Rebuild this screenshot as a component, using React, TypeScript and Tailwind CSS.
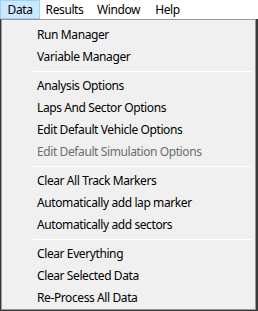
const groups: { label: string; disabled?: boolean }[][] = [
  [{ label: "Run Manager" }, { label: "Variable Manager" }],
  [
    { label: "Analysis Options" },
    { label: "Laps And Sector Options" },
    { label: "Edit Default Vehicle Options" },
    { label: "Edit Default Simulation Options", disabled: true },
  ],
  [
    { label: "Clear All Track Markers" },
    { label: "Automatically add lap marker" },
    { label: "Automatically add sectors" },
  ],
  [{ label: "Clear Everything" }, { label: "Clear Selected Data" }, { label: "Re-Process All Data" }],
];

export default function App() {
  return (
    <div className="w-[258px] h-[311px] bg-[#3a3a3a] overflow-hidden font-['Noto_Sans',sans-serif] text-[12px] tracking-[-0.4px] text-black">
      <div className="h-[19px] bg-white flex items-center">
        <div className="h-full w-[40px] flex items-center justify-center bg-[#cce8ff] border border-[#99d1ff]">Data</div>
        <div className="w-[49px] text-center">Results</div>
        <div className="w-[59px] text-center">Window</div>
        <div className="w-[39px] text-center">Help</div>
      </div>
      <div className="ml-px w-[255px] h-[291px] bg-[#f0f0f0] border border-[#979797] pt-[4px]">
        {groups.map((g, i) => (
          <div key={i}>
            {i > 0 && (
              <div className="py-[3px] pl-[31px] pr-[3px]">
                <div className="h-px bg-[#d7d7d7] border-b border-white" />
              </div>
            )}
            {g.map((item) => (
              <div
                key={item.label}
                className={`h-[22px] flex items-center pl-[35px] ${item.disabled ? "text-[#6d6d6d]" : ""}`}
              >
                {item.label}
              </div>
            ))}
          </div>
        ))}
      </div>
    </div>
  );
}
